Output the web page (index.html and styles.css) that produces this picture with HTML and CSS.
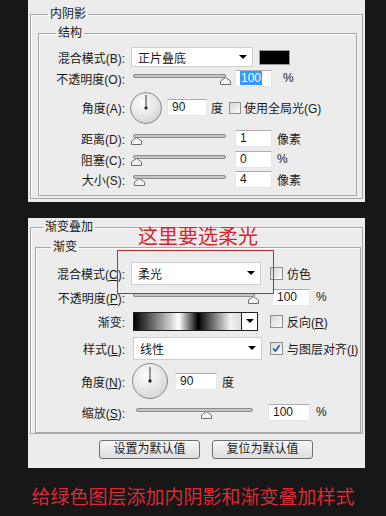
FILE: index.html
```html
<!DOCTYPE html>
<html lang="zh-CN">
<head>
  <meta charset="UTF-8" />
  <title>内阴影和渐变叠加</title>
  <meta name="viewport" content="width=device-width, initial-scale=1.0" />
  <link rel="stylesheet" href="styles.css">
</head>
<body>

  <svg width="0" height="0" class="defs">
    <defs>
      <radialGradient id="dialFill" cx="40%" cy="35%" r="70%">
        <stop offset="0" stop-color="#ffffff" />
        <stop offset="1" stop-color="#d4d4d4" />
      </radialGradient>
    </defs>
  </svg>

  <!-- 内阴影 -->
  <div class="panel panel-top">
    <fieldset class="group">
      <legend>内阴影</legend>
      <fieldset class="sub">
        <legend>结构</legend>

        <div class="row h22">
          <span class="lbl">混合模式(B):</span>
          <div class="select m4 w122"><span>正片叠底</span><i class="arrow"></i></div>
          <span class="swatch m6"></span>
        </div>

        <div class="row h20">
          <span class="lbl">不透明度(O):</span>
          <div class="slider m6 w93">
            <svg class="thumb" style="left: 87px" viewBox="0 0 11 8"><path d="M0.5 7.5V4L5.5 0.5L10.5 4V7.5Z" fill="#f4f4f4" stroke="#707070"/></svg>
          </div>
          <span class="field m9 w37"><span class="hl">100</span></span>
          <span class="m11">%</span>
        </div>

        <div class="row h39">
          <span class="lbl">角度(A):</span>
          <svg class="dial m3" width="32" height="32" viewBox="0 0 32 32">
            <circle cx="16" cy="16" r="15.5" fill="url(#dialFill)" stroke="#8a8a8a"/>
            <line x1="16" y1="16" x2="16" y2="3" stroke="#333"/>
            <circle cx="16" cy="16" r="1.6" fill="#222"/>
          </svg>
          <span class="field m5 w40">90</span>
          <span class="m4">度</span>
          <span class="check m6"></span>
          <span class="m3">使用全局光(G)</span>
        </div>

        <div class="row h22">
          <span class="lbl">距离(D):</span>
          <div class="slider m6 w93">
            <svg class="thumb" style="left: -2px" viewBox="0 0 11 8"><path d="M0.5 7.5V4L5.5 0.5L10.5 4V7.5Z" fill="#f4f4f4" stroke="#707070"/></svg>
          </div>
          <span class="field m9 w37">1</span>
          <span class="m5">像素</span>
        </div>

        <div class="row h20">
          <span class="lbl">阻塞(C):</span>
          <div class="slider m6 w93">
            <svg class="thumb" style="left: -2px" viewBox="0 0 11 8"><path d="M0.5 7.5V4L5.5 0.5L10.5 4V7.5Z" fill="#f4f4f4" stroke="#707070"/></svg>
          </div>
          <span class="field m9 w37">0</span>
          <span class="m5">%</span>
        </div>

        <div class="row h20">
          <span class="lbl">大小(S):</span>
          <div class="slider m6 w93">
            <svg class="thumb" style="left: 1px" viewBox="0 0 11 8"><path d="M0.5 7.5V4L5.5 0.5L10.5 4V7.5Z" fill="#f4f4f4" stroke="#707070"/></svg>
          </div>
          <span class="field m9 w37">4</span>
          <span class="m5">像素</span>
        </div>
      </fieldset>
    </fieldset>
  </div>

  <!-- 渐变叠加 -->
  <div class="panel panel-bottom">
    <fieldset class="group">
      <legend>渐变叠加</legend>
      <fieldset class="sub">
        <legend>渐变</legend>

        <div class="row h26">
          <span class="lbl">混合模式(<u>C</u>):</span>
          <div class="select tall m4 w130"><span>柔光</span><i class="arrow"></i></div>
          <span class="check big m9"></span>
          <span class="m4">仿色</span>
        </div>

        <div class="row h22">
          <span class="lbl">不透明度(<u>P</u>):</span>
          <div class="slider m6 w122">
            <svg class="thumb" style="left: 115px" viewBox="0 0 11 8"><path d="M0.5 7.5V4L5.5 0.5L10.5 4V7.5Z" fill="#f4f4f4" stroke="#707070"/></svg>
          </div>
          <span class="field m17 w38">100</span>
          <span class="m6">%</span>
        </div>

        <div class="row h26">
          <span class="lbl">渐变:</span>
          <div class="gradient m6">
            <span class="ramp"></span>
            <span class="ramp-btn"><i class="arrow"></i></span>
          </div>
          <span class="check big m12"></span>
          <span class="m4">反向(<u>R</u>)</span>
        </div>

        <div class="row h28">
          <span class="lbl">样式(<u>L</u>):</span>
          <div class="select tall m6 w129"><span>线性</span><i class="arrow"></i></div>
          <span class="check big m8">
            <svg viewBox="0 0 13 13"><path d="M2.5 6.5L5.3 9.5L10.2 2.8" fill="none" stroke="#2b4ba8" stroke-width="2"/></svg>
          </span>
          <span class="m4">与图层对齐(<u>I</u>)</span>
        </div>

        <div class="row h38">
          <span class="lbl">角度(<u>N</u>):</span>
          <svg class="dial m5" width="36" height="36" viewBox="0 0 36 36">
            <circle cx="18" cy="18" r="17.5" fill="url(#dialFill)" stroke="#8a8a8a"/>
            <line x1="18" y1="18" x2="18" y2="4" stroke="#333"/>
            <circle cx="18" cy="18" r="1.7" fill="#222"/>
          </svg>
          <span class="field m7 w42">90</span>
          <span class="m5">度</span>
        </div>

        <div class="row h24">
          <span class="lbl">缩放(<u>S</u>):</span>
          <div class="slider m9 w117">
            <svg class="thumb" style="left: 65px" viewBox="0 0 11 8"><path d="M0.5 7.5V4L5.5 0.5L10.5 4V7.5Z" fill="#f4f4f4" stroke="#707070"/></svg>
          </div>
          <span class="field m15 w42">100</span>
          <span class="m6">%</span>
        </div>
      </fieldset>
    </fieldset>

    <div class="buttons">
      <button>设置为默认值</button>
      <button>复位为默认值</button>
    </div>

    <!-- annotation drawn over the dialog -->
    <div class="note">这里要选柔光</div>
    <div class="note-box"></div>
  </div>

  <p class="caption">给绿色图层添加内阴影和渐变叠加样式</p>

</body>
</html>
```

FILE: styles.css
```css
body {
  margin: 0;
  width: 386px;
  height: 516px;
  overflow: hidden;
  background-color: #171717;
  color: #1a1a1a;
  font-family: "Liberation Sans", "Noto Sans CJK SC", sans-serif;
  font-size: 12px;
}

.defs {
  position: absolute;
}

.panel {
  position: relative;
  margin-left: 28px;
  width: 337px;
  box-sizing: border-box;
  background-color: #ececec;
}

.panel-top {
  padding: 6px 0 3px;
}

.panel-bottom {
  margin-top: 16px;
  padding: 1px 0 9px;
}

fieldset {
  margin: 0;
  min-width: 0;
  border: 1px solid #a8a8a8;
  box-shadow: inset 1px 1px 0 #fafafa;
}

legend {
  padding: 0 2px;
  font-size: 12px;
  line-height: 16px;
}

.group {
  margin: 0 2px;
}

.panel-top .group { padding: 3px 5px 2px 7px; }
.panel-top .group > legend { margin-left: 10px; }
.panel-top .sub { padding: 5px 0 6px 0; }
.panel-top .sub > legend { margin-left: 17px; }

.panel-bottom .group { padding: 4px 1px 0 4px; }
.panel-bottom .group > legend { margin-left: 8px; }
.panel-bottom .sub { padding: 5px 0 8px 3px; }
.panel-bottom .sub > legend { margin-left: 12px; }

/* rows */
.row {
  display: flex;
  align-items: center;
  white-space: nowrap;
}

.h20 { height: 20px; }
.h22 { height: 22px; }
.h24 { height: 24px; }
.h26 { height: 26px; }
.h28 { height: 28px; }
.h38 { height: 38px; }
.h39 { height: 39px; }

.lbl {
  flex: none;
  width: 88px;
  padding-right: 2px;
  box-sizing: border-box;
  text-align: right;
}

.m3 { margin-left: 3px; }
.m4 { margin-left: 4px; }
.m5 { margin-left: 5px; }
.m6 { margin-left: 6px; }
.m7 { margin-left: 7px; }
.m8 { margin-left: 8px; }
.m9 { margin-left: 9px; }
.m11 { margin-left: 11px; }
.m12 { margin-left: 12px; }
.m15 { margin-left: 15px; }
.m17 { margin-left: 17px; }

.w37 { width: 37px; }
.w38 { width: 38px; }
.w40 { width: 40px; }
.w42 { width: 42px; }
.w93 { width: 93px; }
.w117 { width: 117px; }
.w122 { width: 122px; }
.w129 { width: 129px; }
.w130 { width: 130px; }

/* controls */
.select {
  flex: none;
  display: flex;
  align-items: center;
  justify-content: space-between;
  height: 20px;
  padding: 0 5px 0 6px;
  box-sizing: border-box;
  background-color: #fff;
  border: 1px solid #cfcfcf;
}

.select.tall {
  height: 23px;
}

.arrow {
  display: block;
  width: 0;
  height: 0;
  border-left: 4px solid transparent;
  border-right: 4px solid transparent;
  border-top: 4px solid #000;
}

.swatch {
  flex: none;
  width: 31px;
  height: 15px;
  box-sizing: border-box;
  background-color: #000;
  border: 1px solid #9a9a9a;
}

.slider {
  flex: none;
  position: relative;
  height: 16px;
}

.slider::before {
  content: "";
  position: absolute;
  left: 0;
  right: 0;
  top: 4px;
  height: 4px;
  box-sizing: border-box;
  border: 1px solid #8c8c8c;
  border-radius: 2px;
  background-color: #c6c6c6;
}

.thumb {
  position: absolute;
  top: 7px;
  width: 11px;
  height: 8px;
}

.field {
  flex: none;
  height: 17px;
  padding-left: 4px;
  box-sizing: border-box;
  background-color: #fff;
  border: 1px solid #e3e8ee;
  border-top-color: #abadb3;
  line-height: 15px;
}

.hl {
  background-color: #3399ff;
  color: #fff;
  padding: 0 1px;
}

.dial {
  flex: none;
}

.check {
  flex: none;
  width: 12px;
  height: 12px;
  box-sizing: border-box;
  border: 1px solid #8e8f8f;
  background: linear-gradient(135deg, #d6d6d6, #fbfbfb);
}

.check.big {
  width: 13px;
  height: 13px;
}

.check svg {
  display: block;
  width: 11px;
  height: 11px;
}

.gradient {
  flex: none;
  display: flex;
  width: 125px;
  height: 19px;
  box-sizing: border-box;
  border: 1px solid #1e1e1e;
  background-color: #fff;
}

.ramp {
  flex: 1;
  background: linear-gradient(to right, #000 0%, #fff 42%, #000 60%, #f2f2f2 90%, #dcdcdc 100%);
}

.ramp-btn {
  display: flex;
  align-items: center;
  justify-content: center;
  width: 15px;
  border-left: 1px solid #1e1e1e;
}

u {
  text-decoration-thickness: 1px;
  text-underline-offset: 1px;
}

/* buttons */
.buttons {
  display: flex;
  gap: 12px;
  margin-top: 6px;
  padding-left: 71px;
}

.buttons button {
  width: 101px;
  height: 19px;
  padding: 0;
  font-family: inherit;
  font-size: 12px;
  line-height: 17px;
  color: #1a1a1a;
  background: linear-gradient(#f7f7f7, #dddddd);
  border: 1px solid #707070;
  border-radius: 3px;
}

/* red annotation */
.note {
  position: absolute;
  left: 110px;
  top: 8px;
  font-size: 20px;
  line-height: 20px;
  color: #d9262f;
  font-family: "Noto Sans CJK SC", sans-serif;
}

.note-box {
  position: absolute;
  left: 89px;
  top: 32px;
  width: 157px;
  height: 44px;
  box-sizing: border-box;
  border: 1px solid #c22a31;
}

.caption {
  margin: 17px 0 0;
  text-align: center;
  font-family: "Noto Sans CJK SC", sans-serif;
  font-size: 19px;
  line-height: 22px;
  color: #d92a36;
}
```
